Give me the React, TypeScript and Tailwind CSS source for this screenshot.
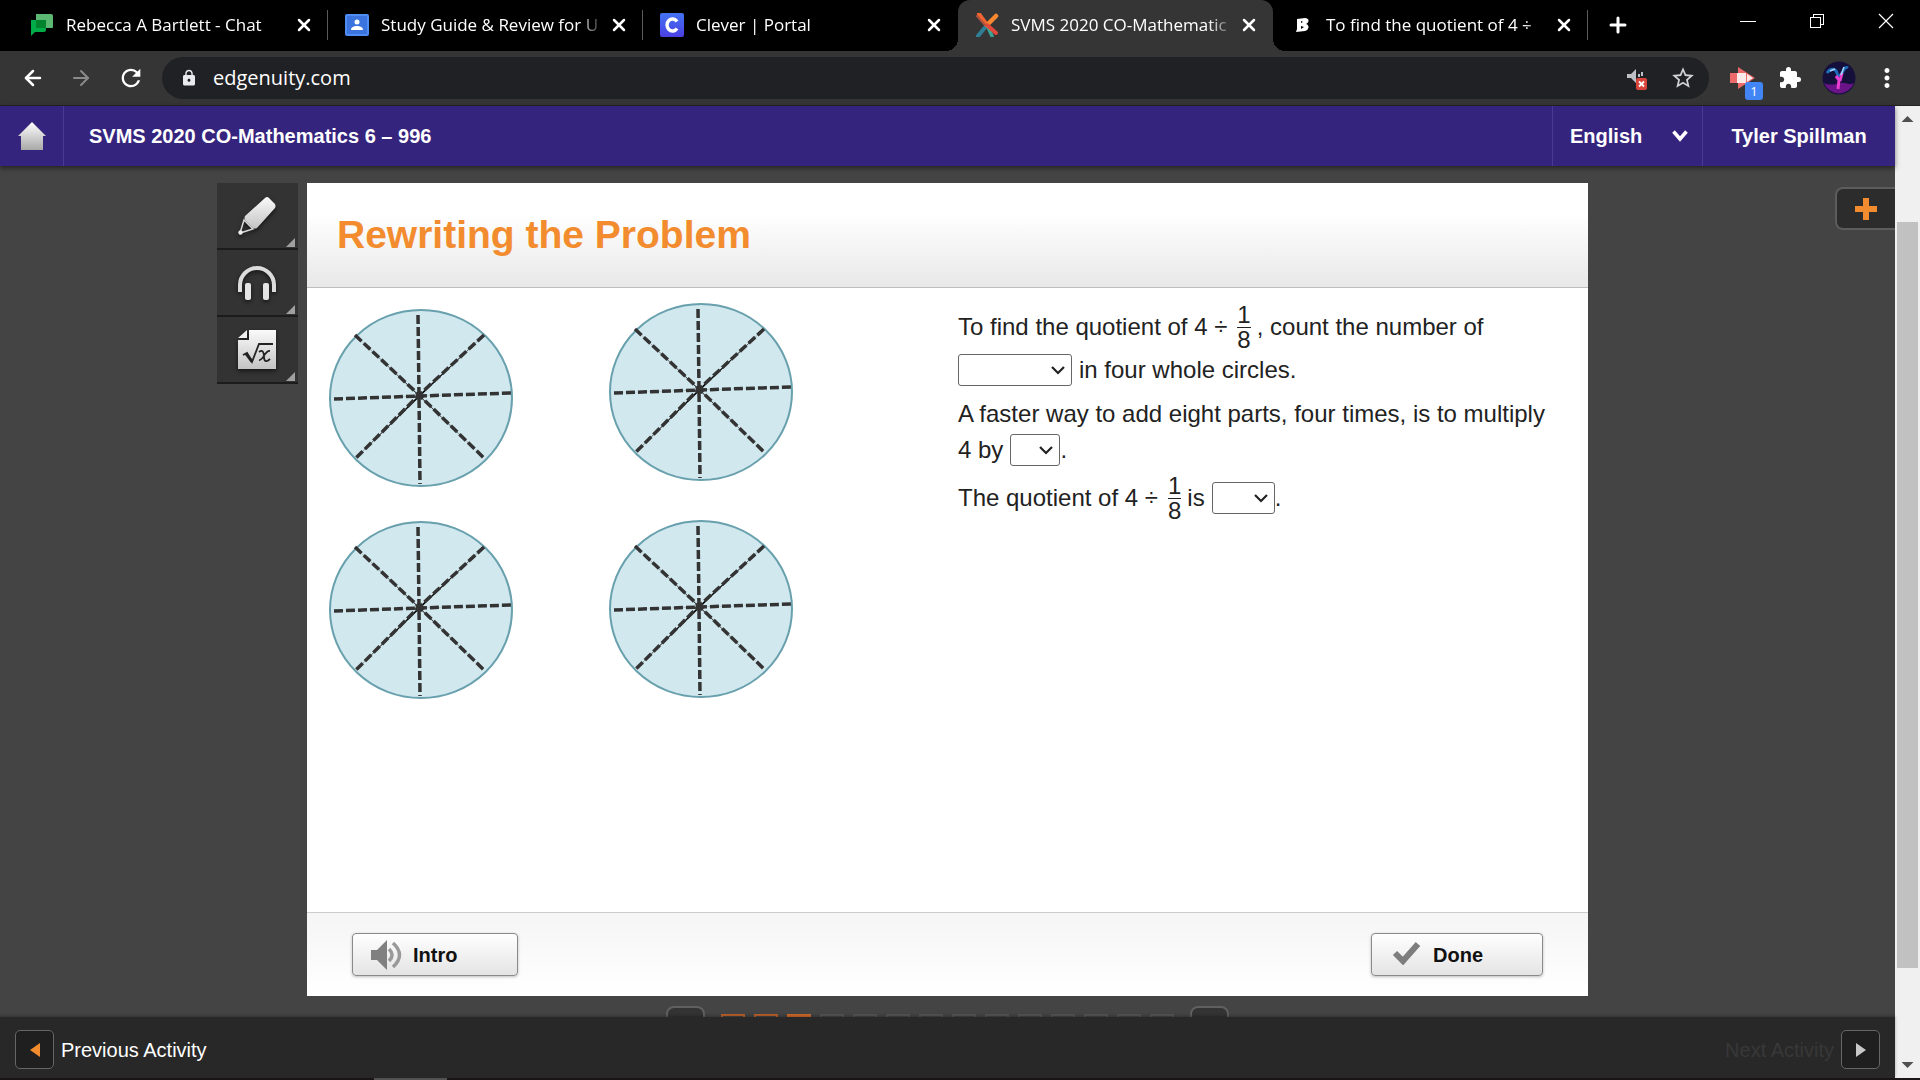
import { useState } from 'react';
import type { ReactNode } from 'react';
import clsx from 'clsx';
import { ArrowLeft, ArrowRight, Plus, X } from 'lucide-react';
import { MdExtension, MdLock, MdMoreVert, MdRefresh, MdStarBorder } from 'react-icons/md';

function ChatIcon() {
  return (
    <svg viewBox="0 0 24 24" className="size-6">
      <path d="M6 1h15a2 2 0 0 1 2 2v11a1 1 0 0 1-1 1H6z" fill="#5bb974" />
      <path d="M1 7h15v10a2 2 0 0 1-2 2H5l-4 4z" fill="#00ac47" />
      <path d="M6 7h10v8H6z" fill="#00832d" />
    </svg>
  );
}

function ClassroomIcon() {
  return (
    <svg viewBox="0 0 24 24" className="size-6">
      <rect y="1" width="24" height="22" rx="2" fill="#4f8df5" />
      <rect x="2" y="3" width="20" height="18" fill="#3b74de" />
      <circle cx="12" cy="9" r="2.500" fill="#fff" />
      <path d="M6 17c0-3 3-4 6-4s6 1 6 4z" fill="#fff" />
    </svg>
  );
}

function CleverIcon() {
  return (
    <svg viewBox="0 0 24 24" className="size-6">
      <defs>
        <linearGradient id="clever" x1="0" y1="0" x2="0" y2="1">
          <stop offset="0" stopColor="#4373f2" />
          <stop offset="1" stopColor="#4a40e4" />
        </linearGradient>
      </defs>
      <rect width="24" height="24" rx="2" fill="url(#clever)" />
      <path d="M17 8.500a5.500 6 0 1 0 0 7" fill="none" stroke="#fff" strokeWidth="3.400" />
    </svg>
  );
}

function EdgenuityIcon() {
  return (
    <svg viewBox="0 0 24 24" className="size-6">
      <path d="M3 23l9-11" stroke="#2f7f96" strokeWidth="4" strokeLinecap="round" />
      <path d="M12 12l5 11" stroke="#3aa394" strokeWidth="3.500" strokeLinecap="round" />
      <path d="M4 1l8 11" stroke="#f26430" strokeWidth="4" strokeLinecap="round" />
      <path d="M12 12l9-9" stroke="#f7882f" strokeWidth="4.500" strokeLinecap="round" />
      <path d="M12 12l9 8" stroke="#e2493b" strokeWidth="4" strokeLinecap="round" />
      <path d="M2 3l8 9" stroke="#b0523c" strokeWidth="2" strokeLinecap="round" />
    </svg>
  );
}

function BrainlyIcon() {
  return (
    <svg viewBox="0 0 24 24" className="size-6">
      <path
        d="M7 6l8-1c4 0 5 4 1 6 4 1 3 6-1 7l-9 1 1-3zM11 8v2l2-1zM11 13v3l3-2z"
        fill="#fff"
        fillRule="evenodd"
      />
    </svg>
  );
}

const tabs = [
  { title: 'Rebecca A Bartlett - Chat', icon: <ChatIcon /> },
  { title: 'Study Guide & Review for U', icon: <ClassroomIcon /> },
  { title: 'Clever | Portal', icon: <CleverIcon /> },
  { title: 'SVMS 2020 CO-Mathematic', icon: <EdgenuityIcon />, active: true },
  { title: 'To find the quotient of 4 ÷', icon: <BrainlyIcon /> },
];

function TabStrip() {
  return (
    <div className="flex h-[51px] shrink-0 items-stretch bg-black pl-[13px] text-white">
      {tabs.map((tab, i) => (
        <div
          key={tab.title}
          className={clsx(
            'relative flex w-[315px] min-w-0 items-center pr-[14px] pb-[2px] pl-[17px]',
            tab.active && 'rounded-t-xl bg-[#353535]',
          )}
        >
          {tab.active && (
            <>
              <span className="absolute bottom-0 -left-3 size-3 bg-[radial-gradient(circle_at_0_0,#000_12px,#353535_12px)]" />
              <span className="absolute -right-3 bottom-0 size-3 bg-[radial-gradient(circle_at_100%_0,#000_12px,#353535_12px)]" />
            </>
          )}
          <button className="flex min-w-0 flex-1 items-center gap-3 text-left">
            <span className="shrink-0">{tab.icon}</span>
            <span className="flex-1 text-[17px] leading-6 whitespace-nowrap [mask-image:linear-gradient(to_right,#000_88%,transparent)]">
              {tab.title}
            </span>
          </button>
          <button aria-label="Close tab" className="ml-1 shrink-0">
            <X className="size-5" strokeWidth={3} />
          </button>
          {!tab.active && i !== 2 && <span className="absolute right-0 h-[30px] w-px bg-[#5a5a5a]" />}
        </div>
      ))}
      <button aria-label="New tab" className="ml-[18px] pb-[2px]">
        <Plus className="size-6" strokeWidth={3} />
      </button>
      <div className="ml-auto flex pb-[9px]">
        <button aria-label="Minimize" className="flex w-[69px] items-center justify-center">
          <span className="h-px w-4 bg-white" />
        </button>
        <button aria-label="Restore" className="flex w-[69px] items-center justify-center">
          <svg viewBox="0 0 16 16" className="size-4" fill="none" stroke="#fff" shapeRendering="crispEdges">
            <path d="M1.500 4.500h10v10h-10zM4.500 4V1.500h10v10H12" />
          </svg>
        </button>
        <button aria-label="Close window" className="flex w-[69px] items-center justify-center">
          <svg viewBox="0 0 16 16" className="size-4" stroke="#fff" strokeWidth="1.200">
            <path d="M1 1l14 14M15 1L1 15" />
          </svg>
        </button>
      </div>
    </div>
  );
}

function AddressBar() {
  return (
    <div className="flex h-[55px] shrink-0 items-center border-b border-[#222] bg-[#353535] pr-[18px] text-white">
      <div className="flex w-[162px] shrink-0 items-center gap-6 pl-[21px]">
        <button aria-label="Back">
          <ArrowLeft className="size-6" strokeWidth={2.5} />
        </button>
        <button aria-label="Forward" className="text-[#8a8a8a]">
          <ArrowRight className="size-6" strokeWidth={2} />
        </button>
        <button aria-label="Reload">
          <MdRefresh className="size-7" />
        </button>
      </div>
      <div className="flex h-[42px] min-w-0 flex-1 items-center rounded-full bg-[#202124] pr-[13px] pl-[18px]">
        <MdLock className="size-[18px] text-[#e8eaed]" />
        <input
          aria-label="Address"
          defaultValue="edgenuity.com"
          className="ml-[15px] min-w-0 flex-1 bg-transparent text-[20px] outline-none"
        />
        <button aria-label="Tab muted" className="mr-[22px]">
          <svg viewBox="0 0 22 24" className="h-6 w-[22px]">
            <path d="M1 8h4l5-5v14l-5-5H1z" fill="#bdc1c6" />
            <path d="M13 8v3M16 6v4" stroke="#bdc1c6" strokeWidth="2" />
            <rect x="10" y="12" width="11" height="12" rx="2" fill="#d9443a" />
            <path d="M13 15.500l5 5M18 15.500l-5 5" stroke="#fff" strokeWidth="1.800" />
          </svg>
        </button>
        <button aria-label="Bookmark">
          <MdStarBorder className="size-[26px] text-[#d0d2d5]" />
        </button>
      </div>
      <div className="flex items-center">
        <button aria-label="Video extension" className="relative ml-[21px]">
          <svg viewBox="0 0 26 24" className="h-6 w-[26px]">
            <path d="M0 7h8V1l17 11L8 23v-6H0z" fill="#ec6a6a" />
            <path d="M7 7h9v10H7zM17 8l6 4-6 4z" fill="#fff" opacity="0.85" />
          </svg>
          <span className="absolute top-4 left-[15px] h-[18px] w-[18px] rounded-[3px] bg-[#4285f4] text-center text-[13px] leading-[18px]">
            1
          </span>
        </button>
        <button aria-label="Extensions" className="ml-[22px]">
          <MdExtension className="size-6" />
        </button>
        <button aria-label="Profile" className="ml-5">
          <svg viewBox="0 0 34 34" className="size-[34px]">
            <circle cx="17" cy="17" r="16.500" fill="#150f3c" />
            <path d="M2 22a16 16 0 0 0 30 0c-5 3-8-1-13 0s-12 3-17 0z" fill="#6b1488" />
            <path d="M5 12c4-6 9-4 10 0s3 3 5 0 3-7 6-5" fill="none" stroke="#1f6fb8" strokeWidth="3" />
            <path d="M14 15l3 4-1 9M20 12l-2 8" fill="none" stroke="#e93fd0" strokeWidth="3" />
            <path d="M8 10l5-2M22 6l-3 8" stroke="#a9d6ff" strokeWidth="1.500" />
          </svg>
        </button>
        <button aria-label="Menu" className="ml-4">
          <MdMoreVert className="size-[30px]" />
        </button>
      </div>
    </div>
  );
}

function CourseHeader() {
  return (
    <header className="z-10 flex h-[60px] shrink-0 items-stretch bg-[#35247e] text-[20px] font-bold text-white shadow-[0_2px_5px_rgba(0,0,0,0.5)]">
      <a href="#home" aria-label="Home" className="flex w-[64px] items-center justify-center border-r border-[#4a3b90]">
        <svg viewBox="0 0 28 28" className="size-7">
          <defs>
            <linearGradient id="home" x1="0" y1="0" x2="0" y2="1">
              <stop offset="0" stopColor="#fff" />
              <stop offset="1" stopColor="#a8a8a8" />
            </linearGradient>
          </defs>
          <path d="M14 0l14 14h-3v14H3V14H0z" fill="url(#home)" />
        </svg>
      </a>
      <h2 className="flex flex-1 items-center pl-[25px]">SVMS 2020 CO-Mathematics 6 – 996</h2>
      <button className="flex w-[150px] items-center justify-between border-l border-[#4a3b90] pr-[14px] pl-[17px]">
        English
        <svg viewBox="0 0 16 12" className="h-3 w-4" fill="none" stroke="#fff" strokeWidth="3.500">
          <path d="M1.500 1.500L8 9l6.500-7.500" />
        </svg>
      </button>
      <div className="flex w-[193px] items-center justify-center border-l border-[#4a3b90]">Tyler Spillman</div>
    </header>
  );
}

function ToolButton({ label, children }: { label: string; children: ReactNode }) {
  return (
    <button
      aria-label={label}
      className="relative flex h-[67px] w-full items-center justify-center border-b-2 border-[#1c1c1c] bg-[#333]"
    >
      <svg viewBox="0 0 40 40" className="mr-[2px] size-10 drop-shadow-[0_2px_2px_rgba(0,0,0,0.6)]">
        <defs>
          <linearGradient id="tool" x1="0" y1="0" x2="0" y2="1">
            <stop offset="0" stopColor="#fafafa" />
            <stop offset="1" stopColor="#c4c4c4" />
          </linearGradient>
        </defs>
        {children}
      </svg>
      <span className="absolute right-[3px] bottom-px size-[9px] bg-[#a0a0a0] [clip-path:polygon(100%_0,100%_100%,0_100%)]" />
    </button>
  );
}

function Toolbar() {
  return (
    <div className="w-[81px]">
      <ToolButton label="Highlighter">
        <path d="M28 2q2-2 4 0l6 6q1 2 0 4L20 32q-2 1-4 0l-8-8q-1-2 0-4z" fill="url(#tool)" />
        <path d="M7 24l9 9-13 4z" fill="none" stroke="#d8d8d8" strokeWidth="1.500" />
        <circle cx="3.500" cy="36.500" r="2.200" fill="#eee" />
      </ToolButton>
      <ToolButton label="Read aloud">
        <path d="M3 29v-7a17 17 0 0 1 34 0v7" fill="none" stroke="#dcdcdc" strokeWidth="4" />
        <rect x="8" y="20" width="6" height="17" rx="2" fill="#e4e4e4" />
        <rect x="26" y="20" width="6" height="17" rx="2" fill="#e4e4e4" />
      </ToolButton>
      <ToolButton label="Formulas">
        <path d="M12 0h27v39H1V10h11z" fill="url(#tool)" />
        <path d="M10 0v8H1z" fill="#eee" />
        <path d="M6 25l4-2 5 9 7-18h14" fill="none" stroke="#222" strokeWidth="1.800" />
        <path d="M9 23.500l6 8" stroke="#222" strokeWidth="3" />
        <path d="M22 22c4-3 5 1 5 5s2 6 6 2M33 21c-5-1-7 10-11 9" fill="none" stroke="#222" strokeWidth="1.800" />
      </ToolButton>
    </div>
  );
}

/* Circle cut into eight parts by dashed lines */
function EighthsCircle() {
  return (
    <svg viewBox="0 0 184 180" className="h-[180px] w-[184px]">
      <ellipse cx="92" cy="90" rx="91" ry="88" fill="#d1e8ee" stroke="#68a0ad" strokeWidth="2" />
      <g stroke="#333" strokeWidth="3.500" strokeDasharray="9 3">
        <path d="M89 7l1 80 1 89" />
        <path d="M5 91l85-3 92-3" />
        <path d="M26 27l64 60 65 63" />
        <path d="M155 27L90 87l-63 63" />
      </g>
      <circle cx="90" cy="88" r="3.500" fill="#333" />
    </svg>
  );
}

function Fraction({ top, bottom }: { top: number; bottom: number }) {
  return (
    <span className="flex flex-col items-center leading-6">
      <span className="border-b border-[#222]">{top}</span>
      <span>{bottom}</span>
    </span>
  );
}

function Blank({ label, className }: { label: string; className: string }) {
  return (
    <span className={clsx('relative', className)}>
      <select
        aria-label={label}
        className="block h-8 w-full appearance-none rounded-[3px] border border-[#666] bg-white text-[20px]"
      >
        <option></option>
      </select>
      <svg
        viewBox="0 0 14 9"
        className="pointer-events-none absolute top-3 right-[7px] h-[9px] w-[14px]"
        fill="none"
        stroke="#222"
        strokeWidth="2.200"
      >
        <path d="M1 1l6 6 6-6" />
      </svg>
    </span>
  );
}

function Problem() {
  return (
    <div className="w-[630px] pt-[2px] text-[24px] leading-8 whitespace-nowrap text-[#222]">
      <div className="flex h-[46px] items-center">
        To find the quotient of 4 ÷
        <span className="ml-[10px]">
          <Fraction top={1} bottom={8} />
        </span>
        <span className="ml-[6px]">, count the number of</span>
      </div>
      <div className="mt-1 flex items-center gap-[7px]">
        <Blank label="Parts counted" className="w-[114px]" />
        in four whole circles.
      </div>
      <div className="mt-3 flex items-center">A faster way to add eight parts, four times, is to multiply</div>
      <div className="mt-1 flex items-center">
        4 by
        <Blank label="Multiply 4 by" className="ml-[7px] w-[50px]" />.
      </div>
      <div className="mt-[9px] flex h-[46px] items-center">
        The quotient of 4 ÷
        <span className="ml-[10px]">
          <Fraction top={1} bottom={8} />
        </span>
        <span className="ml-[6px]">is</span>
        <Blank label="Quotient" className="ml-[7px] w-[63px]" />.
      </div>
    </div>
  );
}

const cardButton =
  'flex h-[43px] items-center rounded-[4px] border border-[#8a8a8a] bg-gradient-to-b from-white to-[#e4e4e4] text-[20px] font-bold text-[#111] shadow-[0_1px_3px_rgba(0,0,0,0.25)]';

function LessonCard() {
  return (
    <section className="flex min-h-0 flex-col bg-white">
      <div className="flex h-[105px] shrink-0 items-center border-b border-[#bdbdbd] bg-gradient-to-b from-white from-30% to-[#e8e8e8] pl-[30px]">
        <h1 className="text-[39px] leading-[48px] font-bold text-[#f28c2e]">Rewriting the Problem</h1>
      </div>
      <div className="flex min-h-0 flex-1 justify-between overflow-hidden pt-[14px] pl-[22px]">
        <div className="flex gap-24">
          <div className="flex flex-col gap-8 pt-[6px]">
            <EighthsCircle />
            <EighthsCircle />
          </div>
          <div className="flex flex-col gap-[37px]">
            <EighthsCircle />
            <EighthsCircle />
          </div>
        </div>
        <Problem />
      </div>
      <div className="flex h-[84px] shrink-0 items-start justify-between border-t border-[#ccc] bg-gradient-to-b from-[#f5f5f5] to-white px-[45px] pt-5">
        <button className={clsx(cardButton, 'w-[166px] gap-[10px] pl-[18px]')}>
          <svg viewBox="0 0 32 30" className="h-[30px] w-8">
            <path d="M0 10h6L16 0v30L6 20H0z" fill="#808080" />
            <path d="M18 9q6 6 0 12M22 3q13 12 0 24" fill="none" stroke="#999" strokeWidth="3.500" />
          </svg>
          Intro
        </button>
        <button className={clsx(cardButton, 'w-[172px] gap-3 pl-5')}>
          <svg viewBox="0 0 29 24" className="mb-1 h-6 w-[29px]">
            <path d="M3 12l8 8L26 3" fill="none" stroke="#7d7d7d" strokeWidth="6" />
          </svg>
          Done
        </button>
      </div>
    </section>
  );
}

function Progress() {
  const end = 'h-10 w-[39px] rounded-lg border-2 border-[#606060] bg-[#333]';
  return (
    <div className="flex h-[21px] shrink-0 items-start justify-center overflow-hidden pt-[10px]">
      <button aria-label="Previous frame" className={end} />
      <div className="mx-4 mt-2 flex gap-[9px]">
        {Array.from({ length: 14 }, (_, i) => (
          <span
            key={i}
            className={clsx(
              'size-6 border-2',
              i < 2 && 'border-[#b9602c]',
              i === 2 && 'border-[#d06a2a] bg-[#d06a2a]',
              i > 2 && 'border-[#555]',
            )}
          />
        ))}
      </div>
      <button aria-label="Next frame" className={end} />
    </div>
  );
}

function ActivityBar() {
  const arrow = 'flex h-[39px] w-[39px] items-center justify-center rounded-[5px] border border-[#666] bg-[#1f1f1f]';
  return (
    <footer className="z-10 flex h-[61px] shrink-0 items-center justify-between bg-[#282828] px-[15px] pt-1 text-[20px] shadow-[0_-1px_3px_rgba(0,0,0,0.3)]">
      <button className="flex items-center gap-[7px] text-white">
        <span className={arrow}>
          <svg viewBox="0 0 10 14" className="h-[14px] w-[10px]">
            <path d="M10 0v14L0 7z" fill="#f28c2e" />
          </svg>
        </span>
        Previous Activity
      </button>
      <button disabled className="flex items-center gap-[7px] text-[#383838]">
        Next Activity
        <span className={arrow}>
          <svg viewBox="0 0 10 14" className="h-[14px] w-[10px]">
            <path d="M0 0v14l10-7z" fill="#c8c8c8" />
          </svg>
        </span>
      </button>
    </footer>
  );
}

function Scrollbar() {
  return (
    <div className="flex w-[25px] shrink-0 flex-col items-center bg-[#f0f0f0]">
      <span className="mt-[10px] h-[6px] w-3 bg-[#505050] [clip-path:polygon(50%_0,100%_100%,0_100%)]" />
      <div className="my-[10px] flex w-full flex-1 flex-col px-[2px] pt-[90px] pb-[84px]">
        <span className="flex-1 bg-[#c1c1c1]" />
      </div>
      <span className="mb-[10px] h-[6px] w-3 bg-[#505050] [clip-path:polygon(0_0,100%_0,50%_100%)]" />
    </div>
  );
}

export default function App() {
  const [notesOpen, setNotesOpen] = useState(false);

  return (
    <div className="flex h-screen flex-col overflow-hidden bg-[#444] font-['Liberation_Sans',Arial,sans-serif]">
      <div className="font-['Open_Sans','Noto_Sans',sans-serif]">
        <TabStrip />
        <AddressBar />
      </div>
      <div className="flex min-h-0 flex-1">
        <div className="flex min-w-0 flex-1 flex-col">
          <CourseHeader />
          <main className="grid min-h-0 flex-1 grid-cols-[1fr_minmax(0,1281px)_1fr] pt-[17px]">
            <div className="flex justify-end pr-[9px]">
              <Toolbar />
            </div>
            <LessonCard />
            <div className="flex items-start justify-end pt-1">
              <button
                aria-label="Notes"
                aria-expanded={notesOpen}
                onClick={() => setNotesOpen(!notesOpen)}
                className="flex h-[43px] w-[60px] items-center justify-center rounded-l-lg border-2 border-r-0 border-[#5c5c5c] bg-[#2c2c2c]"
              >
                <svg viewBox="0 0 22 22" className="size-[22px]">
                  <path d="M8 0h6v8h8v6h-8v8H8v-8H0V8h8z" fill="#f28c2e" />
                </svg>
              </button>
            </div>
          </main>
          <Progress />
          <ActivityBar />
        </div>
        <Scrollbar />
      </div>
      <div className="flex h-[2px] shrink-0 bg-[#1a1618] pl-[374px]">
        <span className="w-[73px] bg-[#555]" />
      </div>
    </div>
  );
}
